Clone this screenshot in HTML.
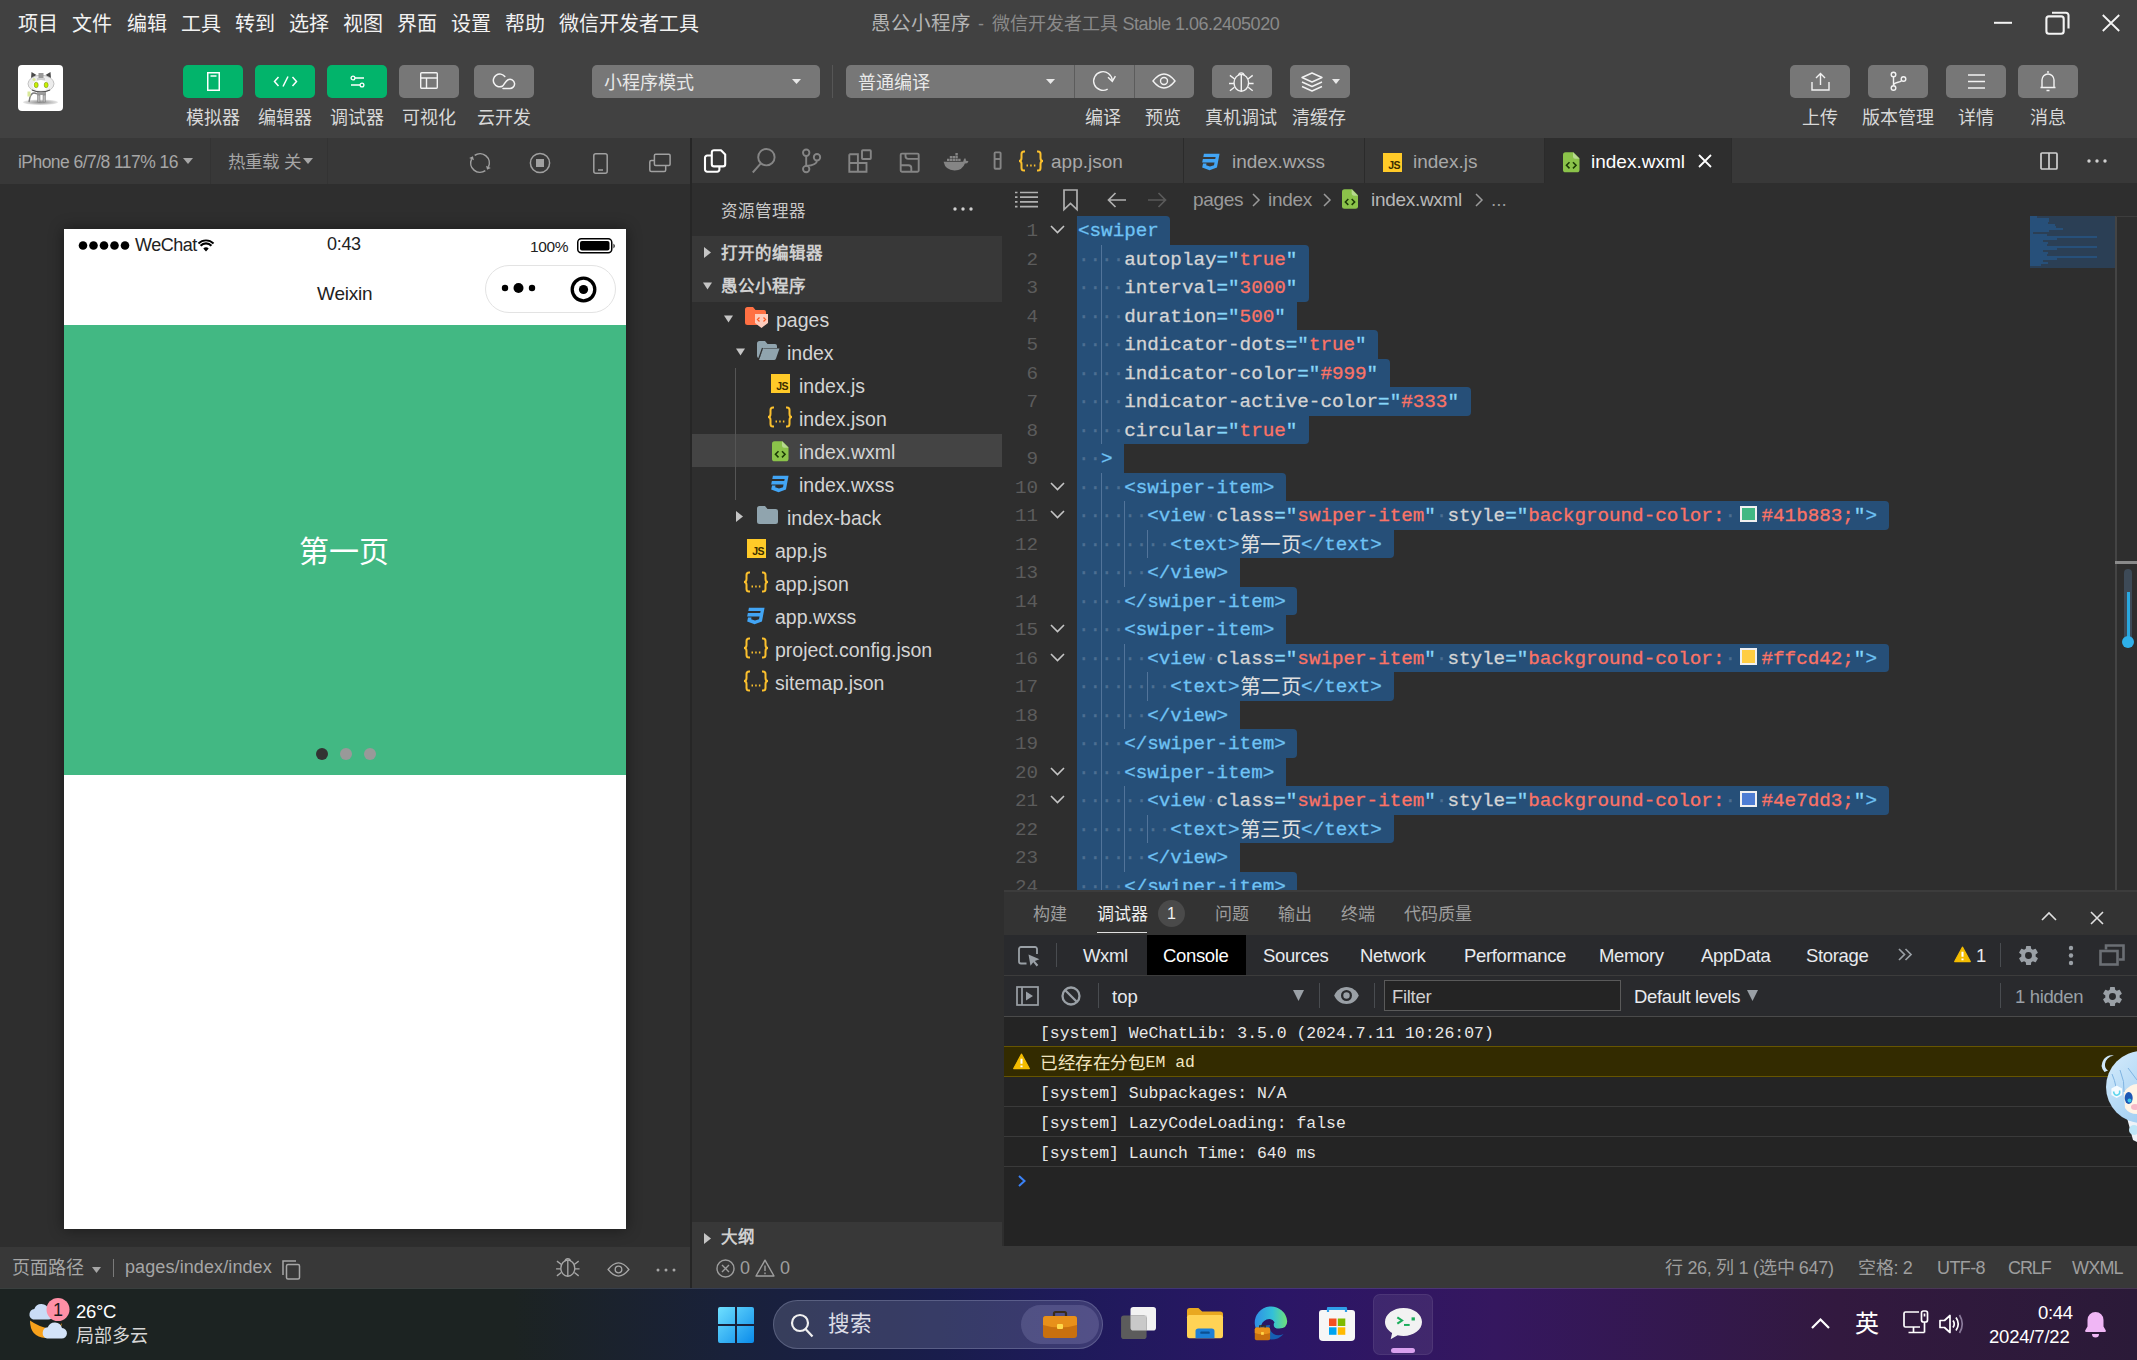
<!DOCTYPE html>
<html lang="zh-CN">
<head>
<meta charset="utf-8">
<title>微信开发者工具</title>
<style>
*{box-sizing:border-box;margin:0;padding:0}
html,body{width:2137px;height:1360px;overflow:hidden;background:#2e2e2e}
body{font-family:"Liberation Sans",sans-serif;color:#d4d4d4;position:relative;font-size:18px;line-height:1}
.abs{position:absolute}
.t{position:absolute;white-space:nowrap;line-height:1}
svg{position:absolute;overflow:visible}
/* ---------- top bars ---------- */
#menubar{position:absolute;left:0;top:0;width:2137px;height:46px;background:#414141}
#menubar .m{position:absolute;top:14px;font-size:20px;color:#f2f2f2;white-space:nowrap}
#toolbar{position:absolute;left:0;top:46px;width:2137px;height:92px;background:#414141}
.btn{position:absolute;top:19px;height:33px;border-radius:5px;background:#777}
.btn.g{background:#02b46b}
.lbl{position:absolute;top:63px;font-size:18px;color:#d8d8d8;white-space:nowrap;transform:translateX(-50%)}
/* ---------- simulator ---------- */
#simhead{position:absolute;left:0;top:138px;width:690px;height:46px;background:#383838}
#sim{position:absolute;left:0;top:184px;width:690px;height:1062px;background:#2e2e2e}
#simfoot{position:absolute;left:0;top:1247px;width:690px;height:41px;background:#383838}
#vsep{position:absolute;left:690px;top:138px;width:1.500px;height:1150px;background:#262626}
/* ---------- explorer ---------- */
#acts{position:absolute;left:692px;top:138px;width:312px;height:45px;background:#383838}
#expl{position:absolute;left:692px;top:183px;width:312px;height:1063px;border-top:1px solid #2e2e2e;background:#2e2e2e}
.sec{position:absolute;left:0;width:310px;height:33px;background:#383838}
.sec span{position:absolute;left:29px;top:9px;font-size:16.5px;font-weight:bold;color:#d0d0d0;white-space:nowrap}
.row{position:absolute;left:0;width:310px;height:33px}
.row .n{position:absolute;top:8.500px;font-size:19.500px;color:#d4d4d4;white-space:nowrap}
.jsi{position:absolute;width:18.500px;height:18.500px;background:#ffca28}
.jsi b{position:absolute;right:1.500px;bottom:1.500px;font-size:10.500px;line-height:1;letter-spacing:-0.6px;color:#3b2c00}
/* ---------- editor ---------- */
#tabs{position:absolute;left:1004px;top:138px;width:1133px;height:45px;background:#383838}
.tab{position:absolute;top:0;height:45px;border-right:1px solid #2b2b2b}
.tab .n{position:absolute;top:14px;font-size:19px;color:#a8a8a8;white-space:nowrap}
#crumbs{position:absolute;left:1004px;top:183px;width:1133px;height:33px;border-top:1px solid #2e2e2e;background:#2e2e2e}
#editor{position:absolute;left:1004px;top:216px;width:1133px;height:674px;background:#2e2e2e;overflow:hidden}
.ln{position:absolute;margin-top:1px;left:0;width:34px;text-align:right;font-family:"Liberation Mono",monospace;font-size:19.24px;color:#5c5c5c;height:28.5px;line-height:28.5px}
.cl{position:absolute;margin-top:1px;left:74px;height:28.5px;line-height:28.5px;font-family:"Liberation Mono",monospace;font-size:19.24px;white-space:pre;color:#d4d4d4;-webkit-text-stroke:.3px}
.sel{position:absolute;left:73px;height:28.5px;background:#264f78}
.ig{position:absolute;width:1px;height:28.500px;background:#52749a}
.cb{display:inline-block;width:16.500px;height:16.500px;border:2px solid #f0f0f0;margin:0 5px 0 4px;vertical-align:-1px}
.cj{display:inline-block;width:61.500px;overflow:hidden;vertical-align:top;height:28.500px;font-family:"Liberation Serif",serif;font-size:20.500px;color:#e0e0e0;letter-spacing:0.5px;-webkit-text-stroke:0}
.tg{color:#6fc3f5}.pq{color:#86d6f8}.st{color:#fb7366}.ws{color:#4d6f92}
/* ---------- panel ---------- */
#panel{position:absolute;left:1004px;top:890px;width:1133px;height:356px;background:#242424}
#status{position:absolute;left:692px;top:1246px;width:1445px;height:42px;background:#383838}
.pt{position:absolute;top:14px;font-size:17px;color:#9d9d9d;white-space:nowrap}
.cr{position:absolute;left:0;width:1133px;height:30px;border-bottom:1px solid #3a3a3a;background:#242424}
.cr span{position:absolute;left:36px;top:7.500px;font-family:"Liberation Mono",monospace;font-size:16.450px;color:#e8e8e8;white-space:pre;line-height:18px}
.cr.w{background:#332b00;border-top:1px solid #665500;border-bottom:1px solid #665500;margin-top:-1px;height:31px}
.cr.w span{top:7px;color:#f2e6c0}
.cr span .cj2{position:static;display:inline-block;width:105.600px;overflow:hidden;vertical-align:top;height:18px;line-height:18px;font-family:"Liberation Serif",serif;font-size:17.600px;color:#f2e6c0;letter-spacing:-0.4px}
.k1,.k2{font-style:normal;display:inline-block;overflow:hidden;vertical-align:top;height:18px;letter-spacing:0}.k1{width:17.700px}.k2{width:35.400px}
/* ---------- taskbar ---------- */
#taskbar{position:absolute;left:0;top:1288px;width:2137px;height:72px;background:linear-gradient(90deg,#1c2322 0%,#1c2322 24%,#19213a 34%,#191d4c 44%,#1e1a5a 50%,#2b1666 60%,#35175f 70%,#32193f 86%,#2b1a38 100%)}
</style>
</head>
<body>
<div id="menubar">
<span class="m" style="left:18px">项目</span><span class="m" style="left:72px">文件</span><span class="m" style="left:127px">编辑</span><span class="m" style="left:181px">工具</span><span class="m" style="left:235px">转到</span><span class="m" style="left:289px">选择</span><span class="m" style="left:343px">视图</span><span class="m" style="left:397px">界面</span><span class="m" style="left:451px">设置</span><span class="m" style="left:505px">帮助</span><span class="m" style="left:559px">微信开发者工具</span>
<span class="t" style="left:871px;top:14px;font-size:19.500px;color:#b4b4b4">愚公小程序</span><span class="t" style="left:978px;top:15px;font-size:18px;color:#8a8a8a">-</span><span class="t" style="left:992px;top:15px;font-size:18px;color:#8a8a8a">微信开发者工具</span><span id="stb" class="t" style="left:1122.500px;top:15px;font-size:18px;color:#8a8a8a;letter-spacing:-0.5px">Stable 1.06.2405020</span>
<svg style="left:1990px;top:10px" width="140" height="28" viewBox="0 0 140 28" fill="none" stroke="#f4f4f4" stroke-width="2.100">
<path d="M4 12.800h18" stroke-width="2"/>
<rect x="56.400" y="6.400" width="17.300" height="17.300" rx="2.500"/><path d="M62 2.700h14a2.500 2.500 0 0 1 2.500 2.500V18.500"/>
<path d="M112.800 5l16.400 16M129.200 5l-16.400 16" stroke-width="1.800"/>
</svg>
</div>
<div id="toolbar">
<div class="abs" style="left:18px;top:19px;width:45px;height:45.500px;border-radius:4px;background:#fff;overflow:hidden">
<svg style="left:0;top:0" width="45" height="45" viewBox="0 0 45 45">
<defs><radialGradient id="sh"><stop offset="0" stop-color="#8a8a8a"/><stop offset="1" stop-color="#e8e8e8"/></radialGradient></defs>
<ellipse cx="22.500" cy="37.300" rx="17.500" ry="2.800" fill="url(#sh)"/>
<path d="M13 13.500l.5-6.500 5 3zM33 13.500l-.5-6.500-5 3z" fill="#4a4a4a"/>
<ellipse cx="23" cy="18.800" rx="13" ry="8.600" fill="#ececec" stroke="#b5b5b5" stroke-width=".8"/>
<path d="M20.500 8h5v6.500h-5z" fill="#9a9a9a"/><path d="M19 13h8v3h-8z" fill="#cfcfcf"/>
<ellipse cx="23" cy="20.200" rx="8.500" ry="5.200" fill="#fff"/>
<ellipse cx="18.200" cy="20" rx="2" ry="2.800" fill="#c6f000" stroke="#6b7a1a" stroke-width=".5"/><ellipse cx="28.200" cy="20" rx="2" ry="2.800" fill="#c6f000" stroke="#6b7a1a" stroke-width=".5"/>
<path d="M14 25q9 4 18 0" stroke="#555" stroke-width="1.300" fill="none"/>
<path d="M19 27h9v3h-9z" fill="#9c9c9c"/><path d="M19.500 30h2.500v7h-2.500zM25 30h2.500v7H25z" fill="#b9b9b9" stroke="#777" stroke-width=".5"/>
<path d="M19 29q-5-3-7 3l-1 5" stroke="#7a7a7a" stroke-width="1.400" fill="none"/>
<path d="M9.500 26.500h3v5h-3z" fill="#d9e89a"/><circle cx="16" cy="14.500" r="1.500" fill="#d9e89a"/>
</svg></div>

<div class="btn g" style="left:183px;width:60px"><svg style="left:24px;top:7px" width="13" height="19" viewBox="0 0 13 19" fill="none" stroke="#fff" stroke-width="1.5"><rect x=".75" y=".75" width="11.500" height="17.500"/><path d="M3.500 4h6"/></svg></div>
<div class="btn g" style="left:255px;width:60px"><svg style="left:18px;top:10px" width="25" height="13" viewBox="0 0 25 13" fill="none" stroke="#fff" stroke-width="1.5"><path d="M5.500 2L1.500 6.500l4 4.500M19.500 2l4 4.500-4 4.500M15 1.500l-5 10"/></svg></div>
<div class="btn g" style="left:327px;width:60px"><svg style="left:23px;top:10px" width="15" height="13" viewBox="0 0 15 13" fill="none" stroke="#fff" stroke-width="1.300"><circle cx="3" cy="3" r="1.900"/><path d="M5 3h9M1 10h9"/><circle cx="12" cy="10" r="1.900"/></svg></div>
<div class="btn" style="left:399px;width:60px"><svg style="left:21px;top:7px" width="18" height="17" viewBox="0 0 18 17" fill="none" stroke="#f2f2f2" stroke-width="1.400"><rect x=".7" y=".7" width="16.600" height="15.600" rx="1"/><path d="M.7 6h16.600M6.500 6v10"/></svg></div>
<div class="btn" style="left:474px;width:60px"><svg style="left:0;top:0" width="60" height="33" viewBox="0 0 60 33" fill="none" stroke="#f4f4f4" stroke-width="1.500" stroke-linecap="round"><path d="M30.800 11.500A6.400 6.400 0 1 0 28.300 21.300C30.300 20 31.300 16 34 14.700A4.600 4.600 0 1 1 35.200 23.400H29"/></svg></div>
<span class="lbl" style="left:213px">模拟器</span><span class="lbl" style="left:285px">编辑器</span><span class="lbl" style="left:357px">调试器</span><span class="lbl" style="left:429px">可视化</span><span class="lbl" style="left:504px">云开发</span>

<div class="btn" style="left:592px;width:228px"><span class="t" style="left:12px;top:9px;font-size:18px;color:#e8e8e8">小程序模式</span><svg style="left:200px;top:14px" width="9" height="5" viewBox="0 0 9 5"><path d="M0 0h9L4.500 5z" fill="#e8e8e8"/></svg></div>
<div class="abs" style="left:832px;top:19px;width:1px;height:33px;background:#565656"></div>
<div class="btn" style="left:846px;width:348px"><span class="t" style="left:12px;top:9px;font-size:18px;color:#e8e8e8">普通编译</span><svg style="left:200px;top:14px" width="9" height="5" viewBox="0 0 9 5"><path d="M0 0h9L4.500 5z" fill="#e8e8e8"/></svg>
<div class="abs" style="left:228px;top:0;width:1px;height:33px;background:#5c5c5c"></div><div class="abs" style="left:288px;top:0;width:1px;height:33px;background:#5c5c5c"></div>
<svg style="left:246px;top:6px" width="24" height="20" viewBox="0 0 24 20" fill="none" stroke="#f2f2f2" stroke-width="1.400"><path d="M15.650 18.050A9.300 9.300 0 1 1 20.260 9.190"/><path d="M16 6.300L20.300 10.300 23.400 5.200"/></svg>
<svg style="left:306px;top:7px" width="24" height="18" viewBox="0 0 24 18" fill="none" stroke="#f2f2f2" stroke-width="1.400"><path d="M1 9q11-14 22 0q-11 14-22 0z"/><circle cx="12" cy="9" r="3.500"/></svg>
</div>
<div class="btn" style="left:1212px;width:60px"><svg style="left:17px;top:5px" width="25" height="22" viewBox="0 0 25 22" fill="none" stroke="#f2f2f2" stroke-width="1.400"><path d="M9.300 5.700A3.100 3.800 0 0 1 15.300 5.700"/><ellipse cx="12.300" cy="12.800" rx="7.300" ry="8.400"/><path d="M12.300 4.400V21.200M4.900 13.500H0M19.700 13.500h4.900M5.600 9L.9 5.400M19 9l4.700-3.600M5.400 17.200L.9 20.800M19.200 17.200l4.500 3.600"/></svg></div>
<div class="btn" style="left:1290px;width:60px"><svg style="left:11px;top:7px" width="22" height="20" viewBox="0 0 22 20" fill="none" stroke="#f2f2f2" stroke-width="1.400" stroke-linejoin="round"><path d="M11 1l10 4.500-10 4.500L1 5.500z"/><path d="M1 10l10 4.500L21 10M1 14.500L11 19l10-4.500"/></svg><svg style="left:42px;top:14px" width="8" height="5" viewBox="0 0 8 5"><path d="M0 0h8L4 5z" fill="#e8e8e8"/></svg></div>
<span class="lbl" style="left:1103px">编译</span><span class="lbl" style="left:1163px">预览</span><span class="lbl" style="left:1241px">真机调试</span><span class="lbl" style="left:1319px">清缓存</span>

<div class="btn" style="left:1790px;width:60px"><svg style="left:21px;top:7px" width="19" height="19" viewBox="0 0 19 19" fill="none" stroke="#f2f2f2" stroke-width="1.400"><path d="M1 10v8h17v-8M9.500 13V1.500M5 6l4.500-4.500L14 6"/></svg></div>
<div class="btn" style="left:1868px;width:60px"><svg style="left:22px;top:6px" width="17" height="21" viewBox="0 0 17 21" fill="none" stroke="#f2f2f2" stroke-width="1.400"><circle cx="3.500" cy="3.500" r="2.300"/><circle cx="3.500" cy="17" r="2.300"/><circle cx="13.500" cy="8" r="2.300"/><path d="M3.500 6v8.500M3.500 14.500c0-4 7.500-2.500 8-5"/></svg></div>
<div class="btn" style="left:1946px;width:60px"><svg style="left:22px;top:9px" width="17" height="15" viewBox="0 0 17 15" fill="none" stroke="#f2f2f2" stroke-width="1.400"><path d="M0 1h17M0 7.500h17M0 14h17"/></svg></div>
<div class="btn" style="left:2018px;width:60px"><svg style="left:21px;top:5px" width="18" height="22" viewBox="0 0 18 22" fill="none" stroke="#f2f2f2" stroke-width="1.400"><path d="M9 1v2M1.500 17.500h15M3 17.500V10a6 6 0 0 1 12 0v7.500M7.500 20.500h3"/></svg></div>
<span class="lbl" style="left:1820px">上传</span><span class="lbl" style="left:1898px">版本管理</span><span class="lbl" style="left:1976px">详情</span><span class="lbl" style="left:2048px">消息</span>
</div>
<div id="simhead">
<span class="t" style="left:18px;top:15.500px;font-size:17.500px;color:#a6a6a6;letter-spacing:-0.55px">iPhone 6/7/8 117% 16</span>
<svg style="left:183px;top:20px" width="10" height="6" viewBox="0 0 10 6"><path d="M0 0h10L5 6z" fill="#a6a6a6"/></svg>
<div class="abs" style="left:210px;top:0;width:1px;height:46px;background:#333"></div>
<span class="t" style="left:228px;top:15.500px;font-size:17.500px;color:#a6a6a6">热重载 关</span>
<svg style="left:303px;top:20px" width="10" height="6" viewBox="0 0 10 6"><path d="M0 0h10L5 6z" fill="#a6a6a6"/></svg>
<div class="abs" style="left:327px;top:0;width:1px;height:46px;background:#333"></div>
<svg style="left:469px;top:14px" width="22" height="22" viewBox="0 0 22 22" fill="none" stroke="#a0a0a0" stroke-width="1.500"><path d="M16.330 18.620A9.300 9.300 0 0 1 2.570 7.070M5.670 3.380A9.300 9.300 0 0 1 19.430 14.930"/><path d="M3.920 4.170L.21 5.970l4.720 2.200zM18.080 17.830l3.710-1.800-4.720-2.200z" fill="#a0a0a0" stroke="none"/></svg>
<svg style="left:529px;top:14px" width="22" height="22" viewBox="0 0 22 22" fill="none" stroke="#a0a0a0" stroke-width="1.500"><circle cx="11" cy="11" r="9.600"/><rect x="7" y="7" width="8" height="8" fill="#a0a0a0" stroke="none"/></svg>
<svg style="left:592.500px;top:14.500px" width="15" height="21" viewBox="0 0 15 21" fill="none" stroke="#a0a0a0" stroke-width="1.500"><rect x=".8" y=".8" width="13.400" height="19.400" rx="2"/><path d="M5 17h5"/></svg>
<svg style="left:649px;top:14.500px" width="22" height="20" viewBox="0 0 22 20" fill="none" stroke="#a0a0a0" stroke-width="1.500"><rect x="5.400" y="1.300" width="15.700" height="11.200" rx="1.200"/><path d="M5.400 7.500H2.300Q.8 7.500 .8 9V17Q.8 18.500 2.300 18.500H15.200Q16.700 18.500 16.700 17V12.500"/></svg>
</div>
<div id="sim">
<div class="abs" style="left:64px;top:45px;width:562px;height:1000px;background:#fff;box-shadow:0 0 14px rgba(0,0,0,.45)">
<svg style="left:14px;top:11px" width="52" height="11" viewBox="0 0 52 11" fill="#000"><circle cx="5" cy="5.500" r="4.300"/><circle cx="15.500" cy="5.500" r="4.300"/><circle cx="26" cy="5.500" r="4.300"/><circle cx="36.500" cy="5.500" r="4.300"/><circle cx="47" cy="5.500" r="4.300"/></svg>
<span class="t" style="left:71px;top:7px;font-size:18px;color:#222;letter-spacing:-0.5px">WeChat</span>
<svg style="left:133px;top:9px" width="18" height="14" viewBox="0 0 18 14" fill="#000"><path d="M9 13.500L6.300 10.600a3.800 3.800 0 0 1 5.400 0zM4.300 8.500a6.600 6.600 0 0 1 9.400 0l1.500-1.600a8.800 8.800 0 0 0-12.400 0zM.8 4.800a11.600 11.600 0 0 1 16.400 0l-1.300 1.400a9.700 9.700 0 0 0-13.800 0z"/></svg>
<span class="t" style="left:263px;top:6px;font-size:18px;color:#222;letter-spacing:-0.3px">0:43</span>
<span class="t" style="left:466px;top:10px;font-size:15.500px;color:#222;letter-spacing:-0.4px">100%</span>
<svg style="left:513px;top:9px" width="40" height="16" viewBox="0 0 40 16"><rect x=".75" y=".75" width="34" height="14" rx="3.500" fill="none" stroke="#000" stroke-width="1.500"/><rect x="3" y="3" width="29.500" height="9.500" rx="2" fill="#000"/><path d="M36.500 5.500q2.500 2.500 0 5z" fill="#000"/></svg>
<span class="t" style="left:253px;top:55px;font-size:19px;color:#222;letter-spacing:-0.2px">Weixin</span>
<div class="abs" style="left:421px;top:36px;width:131px;height:48px;border:1px solid #e3e3e3;border-radius:24px;background:#fff">
<svg style="left:15px;top:16px" width="36" height="12" viewBox="0 0 36 12" fill="#000"><circle cx="4" cy="6" r="3.200"/><circle cx="17.500" cy="6" r="5"/><circle cx="31" cy="6" r="3.200"/></svg>
<svg style="left:84px;top:10px" width="27" height="27" viewBox="0 0 27 27"><circle cx="13.500" cy="13.500" r="11.300" fill="none" stroke="#000" stroke-width="3.300"/><circle cx="13.500" cy="13.500" r="4.600" fill="#000"/></svg>
</div>
<div class="abs" style="left:0;top:96px;width:562px;height:450px;background:#42b883">
<span class="t" style="left:235px;top:212px;font-size:30px;color:#fff">第一页</span>
<div class="abs" style="left:252px;top:423px;width:12px;height:12px;border-radius:50%;background:#333"></div>
<div class="abs" style="left:276px;top:423px;width:12px;height:12px;border-radius:50%;background:#999"></div>
<div class="abs" style="left:300px;top:423px;width:12px;height:12px;border-radius:50%;background:#999"></div>
</div>
</div>
</div>
<div id="simfoot">
<span class="t" style="left:12px;top:12px;font-size:18px;color:#a6a6a6">页面路径</span>
<svg style="left:92px;top:20px" width="9" height="6" viewBox="0 0 9 6"><path d="M0 0h9L4.500 6z" fill="#a6a6a6"/></svg>
<div class="abs" style="left:113px;top:12px;width:1px;height:18px;background:#7a7a7a"></div>
<span class="t" style="left:125px;top:11px;font-size:18px;color:#a6a6a6;letter-spacing:0.1px">pages/index/index</span>
<svg style="left:282px;top:13px" width="19" height="20" viewBox="0 0 19 20" fill="none" stroke="#a6a6a6" stroke-width="1.500"><path d="M1 15V1h13"/><rect x="4.500" y="4.500" width="13" height="14.500" rx="1.500"/></svg>
<svg style="left:556px;top:9px" width="24" height="21" viewBox="0 0 25 22" fill="none" stroke="#a6a6a6" stroke-width="1.400"><path d="M9.300 5.700A3.100 3.800 0 0 1 15.300 5.700"/><ellipse cx="12.300" cy="12.800" rx="7.300" ry="8.400"/><path d="M12.300 4.400V21.200M4.900 13.500H0M19.700 13.500h4.900M5.600 9L.9 5.400M19 9l4.700-3.600M5.400 17.200L.9 20.800M19.200 17.200l4.500 3.600"/></svg>
<svg style="left:606px;top:14px" width="25" height="17" viewBox="0 0 24 18" fill="none" stroke="#a6a6a6" stroke-width="1.400"><path d="M1 9q11-14 22 0q-11 14-22 0z"/><circle cx="12" cy="9" r="3.500"/></svg>
<svg style="left:656px;top:21px" width="20" height="4" viewBox="0 0 20 4" fill="#a6a6a6"><circle cx="2" cy="2" r="1.500"/><circle cx="10" cy="2" r="1.500"/><circle cx="18" cy="2" r="1.500"/></svg>
</div>
<div id="acts">
<svg style="left:0;top:0" width="312" height="46" viewBox="0 0 312 46" fill="none" stroke="#858585" stroke-width="1.900">
<g stroke="#fff" stroke-width="2.100" stroke-linejoin="round"><path d="M19.700 17.500h-4.500a2.200 2.200 0 0 0-2.200 2.200v11.800a2.200 2.200 0 0 0 2.200 2.200h10a2.200 2.200 0 0 0 2.200-2.200v-3.200"/><path d="M22 12.200h7l4.200 4.200v9.800a2.200 2.200 0 0 1-2.200 2.200h-9a2.200 2.200 0 0 1-2.200-2.200V14.400a2.200 2.200 0 0 1 2.200-2.200z"/></g>
<circle cx="74.400" cy="19.200" r="8.200"/><path d="M68.600 25.600L60.800 34.500"/>
<circle cx="114.200" cy="14.700" r="3.200"/><circle cx="114.200" cy="31.100" r="3.200"/><circle cx="125" cy="19.200" r="3.200"/><path d="M114.200 17.900v10M125 22.400q0 4.500-10.800 5.500"/>
<path d="M157.300 16.200h8.600v17.600M157.300 16.200v17.600h17.200v-8.800h-17.200"/><rect x="170" y="12.200" width="8.800" height="8.800" rx=".8"/>
<rect x="208.700" y="15.600" width="18" height="18.200" rx="1.200"/><path d="M213.500 15.600v2.500q0 2.800 2.800 2.800h10.400M208.700 27.200h7.800q2.800 0 2.800 2.800v3.800"/>
<g fill="#858585" stroke="none"><path d="M251.600 23.800h19.600q.4-2.600 1.800-3.700 1 1.200 1 2.800 1.500-.3 2.500.5-.9 2.200-3.600 2.200-2.300 6.800-10.300 6.800-9.300 0-11-8.600z"/><path d="M255 20.700h2.400v2.400H255zM257.800 20.700h2.400v2.400h-2.400zM260.600 20.700h2.400v2.400h-2.400zM263.400 20.700h2.400v2.400h-2.400zM257.800 17.900h2.400v2.400h-2.400zM260.600 17.900h2.400v2.400h-2.400zM263.400 17.900h2.400v2.400h-2.400zM263.400 15.100h2.400v2.400h-2.400zM266.200 20.700h2.400v2.400h-2.400z"/></g>
<rect x="302.600" y="14.400" width="6" height="16.400" rx=".8"/><path d="M302.600 21h6"/>
</svg>
</div>
<div id="expl">
<span class="t" style="left:29px;top:19px;font-size:16.500px;color:#c8c8c8">资源管理器</span>
<svg style="left:261px;top:23px" width="20" height="4" viewBox="0 0 20 4" fill="#d0d0d0"><circle cx="2" cy="2" r="1.700"/><circle cx="10" cy="2" r="1.700"/><circle cx="18" cy="2" r="1.700"/></svg>
<div class="sec" style="top:52px"><svg style="left:12px;top:11px" width="7" height="11" viewBox="0 0 7 11"><path d="M0 0l7 5.500L0 11z" fill="#c5c5c5"/></svg><span>打开的编辑器</span></div>
<div class="sec" style="top:85px"><svg style="left:10px;top:13px" width="9" height="7" viewBox="0 0 9 7" transform="translate(1 .5)"><path d="M0 0h9L4.500 7z" fill="#c5c5c5"/></svg><span>愚公小程序</span></div>
<div class="row" style="top:118px"><svg style="left:31px;top:13px" width="9" height="7" viewBox="0 0 9 7" transform="translate(1 .5)"><path d="M0 0h9L4.500 7z" fill="#c5c5c5"/></svg><svg style="left:53px;top:5px" width="24" height="22" viewBox="0 0 24 22"><path d="M0 2.500A2.500 2.500 0 0 1 2.500 0H8l2.500 3H19a2 2 0 0 1 2 2v11a2 2 0 0 1-2 2H2.500A2.500 2.500 0 0 1 0 15.500z" fill="#ff7043"/><path d="M10 7h13v9l-6.500 5L10 16z" fill="#ffccbc"/><path d="M14.500 10.500l-2 2 2 2M18.500 10.500l2 2-2 2" stroke="#ff5722" stroke-width="1.300" fill="none"/></svg><span class="n" style="left:84px">pages</span></div>
<div class="row" style="top:151px"><svg style="left:43px;top:13px" width="9" height="7" viewBox="0 0 9 7" transform="translate(1 .5)"><path d="M0 0h9L4.500 7z" fill="#c5c5c5"/></svg><svg style="left:65px;top:6px" width="23" height="19" viewBox="0 0 23 19"><path d="M0 2.500A2.500 2.500 0 0 1 2.500 0H8l2.500 3H18a2 2 0 0 1 2 2v2H6.500L2.500 17H2a2 2 0 0 1-2-2z" fill="#90a4ae"/><path d="M6 7.500h16.500L19 17.500Q18.500 19 17 19H2z" fill="#90a4ae"/><path d="M5.500 7L2 17" stroke="#2e2e2e" stroke-width="1.200"/></svg><span class="n" style="left:95px">index</span></div>
<div class="row" style="top:184px"><div class="jsi" style="left:79px;top:6px"><b>JS</b></div><span class="n" style="left:107px">index.js</span></div>
<div class="row" style="top:217px"><svg style="left:75px;top:5px" width="26" height="22" viewBox="0 0 26 22" fill="none" stroke="#fbc02d" stroke-width="2"><path d="M7 1.500H6q-2.500 0-2.500 2.500v4q0 3-2.500 3 2.500 0 2.500 3v4q0 2.500 2.500 2.500h1M19 1.500h1q2.500 0 2.500 2.500v4q0 3 2.500 3-2.500 0-2.500 3v4q0 2.500-2.500 2.500h-1"/><path d="M8.500 15.500h1.500M12.200 15.500h1.500M15.900 15.500h1.500" stroke-width="2.200"/></svg><span class="n" style="left:107px">index.json</span></div>
<div class="row" style="top:250px;background:#444"><svg style="left:79.5px;top:6.5px" width="16.500" height="20.500" viewBox="0 0 19 23"><path d="M3 0h9l7 7v13a3 3 0 0 1-3 3H3a3 3 0 0 1-3-3V3a3 3 0 0 1 3-3z" fill="#8bc34a"/><path d="M11.500 0v5a2.500 2.500 0 0 0 2.500 2.500h5z" fill="#dcedc8" opacity=".55"/><path d="M7.500 11.500L4 15l3.500 3.500M11.500 11.500L15 15l-3.500 3.500" fill="none" stroke="#1b3a06" stroke-width="1.800"/></svg><span class="n" style="left:107px">index.wxml</span></div>
<div class="row" style="top:283px"><svg style="left:77px;top:7.5px" width="20" height="18" viewBox="0 0 23 23" preserveAspectRatio="none"><path d="M4.500 1h18l-3 17.500L11 22l-8.500-3.500 1-5h4l-.4 2.200 4.400 1.600 4.600-1.700.6-3.600H2.500l.8-4.300h14.200l.5-2.700H3.800z" fill="#42a5f5"/></svg><span class="n" style="left:107px">index.wxss</span></div>
<div class="row" style="top:316px"><svg style="left:44px;top:11px" width="7" height="11" viewBox="0 0 7 11"><path d="M0 0l7 5.500L0 11z" fill="#c5c5c5"/></svg><svg style="left:65px;top:6px" width="21" height="18" viewBox="0 0 21 18"><path d="M0 2.500A2.500 2.500 0 0 1 2.500 0H8l2.500 3h8A2.500 2.500 0 0 1 21 5.500v10a2.500 2.500 0 0 1-2.500 2.500h-16A2.500 2.500 0 0 1 0 15.500z" fill="#90a4ae"/></svg><span class="n" style="left:95px">index-back</span></div>
<div class="row" style="top:349px"><div class="jsi" style="left:55px;top:6px"><b>JS</b></div><span class="n" style="left:83px">app.js</span></div>
<div class="row" style="top:382px"><svg style="left:51px;top:5px" width="26" height="22" viewBox="0 0 26 22" fill="none" stroke="#fbc02d" stroke-width="2"><path d="M7 1.500H6q-2.500 0-2.500 2.500v4q0 3-2.500 3 2.500 0 2.500 3v4q0 2.500 2.500 2.500h1M19 1.500h1q2.500 0 2.500 2.500v4q0 3 2.500 3-2.500 0-2.500 3v4q0 2.500-2.500 2.500h-1"/><path d="M8.500 15.500h1.500M12.200 15.500h1.500M15.900 15.500h1.500" stroke-width="2.200"/></svg><span class="n" style="left:83px">app.json</span></div>
<div class="row" style="top:415px"><svg style="left:53px;top:7.5px" width="20" height="18" viewBox="0 0 23 23" preserveAspectRatio="none"><path d="M4.500 1h18l-3 17.500L11 22l-8.500-3.500 1-5h4l-.4 2.200 4.400 1.600 4.600-1.700.6-3.600H2.500l.8-4.300h14.200l.5-2.700H3.800z" fill="#42a5f5"/></svg><span class="n" style="left:83px">app.wxss</span></div>
<div class="row" style="top:448px"><svg style="left:51px;top:5px" width="26" height="22" viewBox="0 0 26 22" fill="none" stroke="#fbc02d" stroke-width="2"><path d="M7 1.500H6q-2.500 0-2.500 2.500v4q0 3-2.500 3 2.500 0 2.500 3v4q0 2.500 2.500 2.500h1M19 1.500h1q2.500 0 2.500 2.500v4q0 3 2.500 3-2.500 0-2.500 3v4q0 2.500-2.500 2.500h-1"/><path d="M8.500 15.500h1.500M12.200 15.500h1.500M15.900 15.500h1.500" stroke-width="2.200"/></svg><span class="n" style="left:83px">project.config.json</span></div>
<div class="row" style="top:481px"><svg style="left:51px;top:5px" width="26" height="22" viewBox="0 0 26 22" fill="none" stroke="#fbc02d" stroke-width="2"><path d="M7 1.500H6q-2.500 0-2.500 2.500v4q0 3-2.500 3 2.500 0 2.500 3v4q0 2.500 2.500 2.500h1M19 1.500h1q2.500 0 2.500 2.500v4q0 3 2.500 3-2.500 0-2.500 3v4q0 2.500-2.500 2.500h-1"/><path d="M8.500 15.500h1.500M12.200 15.500h1.500M15.900 15.500h1.500" stroke-width="2.200"/></svg><span class="n" style="left:83px">sitemap.json</span></div>
<div class="abs" style="left:43px;top:184px;width:1px;height:132px;background:#555"></div>
<div class="sec" style="top:1038px;height:24px;background:#383838"><svg style="left:12px;top:10.500px" width="7" height="11" viewBox="0 0 7 11"><path d="M0 0l7 5.500L0 11z" fill="#c5c5c5"/></svg><span style="top:7px">大纲</span></div>
</div>
<div id="tabs">
<div class="tab" style="left:0;width:180px"><svg style="left:14px;top:12px" width="26" height="22" viewBox="0 0 26 22" fill="none" stroke="#fbc02d" stroke-width="2"><path d="M7 1.500H6q-2.500 0-2.500 2.500v4q0 3-2.500 3 2.500 0 2.500 3v4q0 2.500 2.500 2.500h1M19 1.500h1q2.500 0 2.500 2.500v4q0 3 2.500 3-2.500 0-2.500 3v4q0 2.500-2.500 2.500h-1"/><path d="M8.500 15.500h1.500M12.200 15.500h1.500M15.900 15.500h1.500" stroke-width="2.200"/></svg><span class="n" style="left:47px">app.json</span></div>
<div class="tab" style="left:180px;width:181px"><svg style="left:16px;top:14.5px" width="20" height="18" viewBox="0 0 23 23" preserveAspectRatio="none"><path d="M4.500 1h18l-3 17.500L11 22l-8.500-3.500 1-5h4l-.4 2.200 4.400 1.600 4.600-1.700.6-3.600H2.500l.8-4.300h14.200l.5-2.700H3.800z" fill="#42a5f5"/></svg><span class="n" style="left:48px">index.wxss</span></div>
<div class="tab" style="left:361px;width:180px"><div class="jsi" style="left:18px;top:15px"><b>JS</b></div><span class="n" style="left:48px">index.js</span></div>
<div class="tab" style="left:541px;width:187px;background:#2e2e2e"><svg style="left:17.5px;top:13.5px" width="16.500" height="20.500" viewBox="0 0 19 23"><path d="M3 0h9l7 7v13a3 3 0 0 1-3 3H3a3 3 0 0 1-3-3V3a3 3 0 0 1 3-3z" fill="#8bc34a"/><path d="M11.500 0v5a2.500 2.500 0 0 0 2.500 2.500h5z" fill="#dcedc8" opacity=".55"/><path d="M7.500 11.500L4 15l3.500 3.500M11.500 11.500L15 15l-3.500 3.500" fill="none" stroke="#1b3a06" stroke-width="1.800"/></svg><span class="n" style="left:46px;color:#fff">index.wxml</span><svg style="left:153px;top:16px" width="14" height="14" viewBox="0 0 14 14" stroke="#fff" stroke-width="1.800"><path d="M1 1l12 12M13 1L1 13"/></svg></div>
<svg style="left:1036px;top:14px" width="18" height="18" viewBox="0 0 18 18" fill="none" stroke="#d0d0d0" stroke-width="1.700"><rect x="1" y="1" width="16" height="16" rx="1"/><path d="M9 1v16"/></svg>
<svg style="left:1083px;top:21px" width="20" height="4" viewBox="0 0 20 4" fill="#d0d0d0"><circle cx="2" cy="2" r="1.700"/><circle cx="10" cy="2" r="1.700"/><circle cx="18" cy="2" r="1.700"/></svg>
</div>
<div id="crumbs">
<svg style="left:11px;top:7px" width="23" height="17" viewBox="0 0 23 17" fill="none" stroke="#b0b0b0" stroke-width="1.700"><path d="M5 1.500h18M5 6.200h18M5 10.900h18M5 15.600h18M0 1.500h2.500M0 6.200h2.500M0 10.900h2.500M0 15.600h2.500"/></svg>
<svg style="left:59px;top:5px" width="15" height="22" viewBox="0 0 15 22" fill="none" stroke="#b0b0b0" stroke-width="1.700"><path d="M1 1h13v19.500l-6.500-6L1 20.500z"/></svg>
<svg style="left:103px;top:8px" width="19" height="16" viewBox="0 0 19 16" fill="none" stroke="#b0b0b0" stroke-width="1.700"><path d="M19 8H1.500M8.500 1L1.500 8l7 7"/></svg>
<svg style="left:144px;top:8px" width="19" height="16" viewBox="0 0 19 16" fill="none" stroke="#5a5a5a" stroke-width="1.700"><path d="M0 8h17.500M10.500 1l7 7-7 7"/></svg>
<span class="t" style="left:189px;top:6px;font-size:19px;color:#9a9a9a;letter-spacing:-0.3px">pages</span>
<svg style="left:248px;top:9px" width="8" height="14" viewBox="0 0 8 14" fill="none" stroke="#9a9a9a" stroke-width="1.500"><path d="M1 1l6 6-6 6"/></svg>
<span class="t" style="left:264px;top:6px;font-size:19px;color:#9a9a9a;letter-spacing:-0.3px">index</span>
<svg style="left:319px;top:9px" width="8" height="14" viewBox="0 0 8 14" fill="none" stroke="#9a9a9a" stroke-width="1.500"><path d="M1 1l6 6-6 6"/></svg>
<svg style="left:338px;top:5px" width="16" height="20" viewBox="0 0 19 23"><path d="M3 0h9l7 7v13a3 3 0 0 1-3 3H3a3 3 0 0 1-3-3V3a3 3 0 0 1 3-3z" fill="#8bc34a"/><path d="M11.500 0v5a2.500 2.500 0 0 0 2.500 2.500h5z" fill="#dcedc8" opacity=".55"/><path d="M7.500 11.500L4 15l3.500 3.500M11.500 11.500L15 15l-3.500 3.500" fill="none" stroke="#1b3a06" stroke-width="1.800"/></svg>
<span class="t" style="left:367px;top:6px;font-size:19px;color:#b8b8b8;letter-spacing:-0.3px">index.wxml</span>
<svg style="left:471px;top:9px" width="8" height="14" viewBox="0 0 8 14" fill="none" stroke="#9a9a9a" stroke-width="1.500"><path d="M1 1l6 6-6 6"/></svg>
<span class="t" style="left:487px;top:6px;font-size:19px;color:#9a9a9a">...</span>
</div>
<div id="editor">
<div class="sel" style="top:0.0px;width:93.4px;border-radius:0 4px 0px 0"></div>
<div class="sel" style="top:28.5px;width:231.9px;border-radius:0 4px 0px 0"></div>
<div class="sel" style="top:57.0px;width:231.9px;border-radius:0 0px 4px 0"></div>
<div class="sel" style="top:85.5px;width:220.4px;border-radius:0 0px 0px 0"></div>
<div class="sel" style="top:114.0px;width:301.2px;border-radius:0 4px 0px 0"></div>
<div class="sel" style="top:142.5px;width:312.7px;border-radius:0 4px 0px 0"></div>
<div class="sel" style="top:171.0px;width:393.6px;border-radius:0 4px 4px 0"></div>
<div class="sel" style="top:199.5px;width:231.9px;border-radius:0 0px 4px 0"></div>
<div class="sel" style="top:228.0px;width:47.2px;border-radius:0 0px 0px 0"></div>
<div class="sel" style="top:256.5px;width:208.8px;border-radius:0 4px 0px 0"></div>
<div class="sel" style="top:285.0px;width:811.6px;border-radius:0 4px 4px 0"></div>
<div class="sel" style="top:313.5px;width:316.5px;border-radius:0 0px 4px 0"></div>
<div class="sel" style="top:342.0px;width:162.6px;border-radius:0 0px 0px 0"></div>
<div class="sel" style="top:370.5px;width:220.4px;border-radius:0 4px 4px 0"></div>
<div class="sel" style="top:399.0px;width:208.8px;border-radius:0 0px 0px 0"></div>
<div class="sel" style="top:427.5px;width:811.6px;border-radius:0 4px 4px 0"></div>
<div class="sel" style="top:456.0px;width:316.5px;border-radius:0 0px 4px 0"></div>
<div class="sel" style="top:484.5px;width:162.6px;border-radius:0 0px 0px 0"></div>
<div class="sel" style="top:513.0px;width:220.4px;border-radius:0 4px 4px 0"></div>
<div class="sel" style="top:541.5px;width:208.8px;border-radius:0 0px 0px 0"></div>
<div class="sel" style="top:570.0px;width:811.6px;border-radius:0 4px 4px 0"></div>
<div class="sel" style="top:598.5px;width:316.5px;border-radius:0 0px 4px 0"></div>
<div class="sel" style="top:627.0px;width:162.6px;border-radius:0 0px 0px 0"></div>
<div class="sel" style="top:655.5px;width:220.4px;border-radius:0 4px 4px 0"></div>
<div class="ig" style="left:97.1px;top:28.5px"></div>
<div class="ig" style="left:97.1px;top:57.0px"></div>
<div class="ig" style="left:97.1px;top:85.5px"></div>
<div class="ig" style="left:97.1px;top:114.0px"></div>
<div class="ig" style="left:97.1px;top:142.5px"></div>
<div class="ig" style="left:97.1px;top:171.0px"></div>
<div class="ig" style="left:97.1px;top:199.5px"></div>
<div class="ig" style="left:97.1px;top:256.5px"></div>
<div class="ig" style="left:97.1px;top:285.0px"></div>
<div class="ig" style="left:120.2px;top:285.0px"></div>
<div class="ig" style="left:97.1px;top:313.5px"></div>
<div class="ig" style="left:120.2px;top:313.5px"></div>
<div class="ig" style="left:143.3px;top:313.5px"></div>
<div class="ig" style="left:97.1px;top:342.0px"></div>
<div class="ig" style="left:120.2px;top:342.0px"></div>
<div class="ig" style="left:97.1px;top:370.5px"></div>
<div class="ig" style="left:97.1px;top:399.0px"></div>
<div class="ig" style="left:97.1px;top:427.5px"></div>
<div class="ig" style="left:120.2px;top:427.5px"></div>
<div class="ig" style="left:97.1px;top:456.0px"></div>
<div class="ig" style="left:120.2px;top:456.0px"></div>
<div class="ig" style="left:143.3px;top:456.0px"></div>
<div class="ig" style="left:97.1px;top:484.5px"></div>
<div class="ig" style="left:120.2px;top:484.5px"></div>
<div class="ig" style="left:97.1px;top:513.0px"></div>
<div class="ig" style="left:97.1px;top:541.5px"></div>
<div class="ig" style="left:97.1px;top:570.0px"></div>
<div class="ig" style="left:120.2px;top:570.0px"></div>
<div class="ig" style="left:97.1px;top:598.5px"></div>
<div class="ig" style="left:120.2px;top:598.5px"></div>
<div class="ig" style="left:143.3px;top:598.5px"></div>
<div class="ig" style="left:97.1px;top:627.0px"></div>
<div class="ig" style="left:120.2px;top:627.0px"></div>
<div class="ig" style="left:97.1px;top:655.5px"></div>
<div class="ln" style="top:0.0px">1</div>
<svg style="left:46px;top:9.0px" width="15" height="9" viewBox="0 0 15 9" fill="none" stroke="#c5c5c5" stroke-width="1.600"><path d="M1 1l6.500 6.500L14 1"/></svg>
<div class="cl" style="top:0.0px"><span class="tg">&lt;swiper</span></div>
<div class="ln" style="top:28.5px">2</div>
<div class="cl" style="top:28.5px"><span class="ws">····</span>autoplay<span class="pq">="</span><span class="st">true</span><span class="pq">"</span></div>
<div class="ln" style="top:57.0px">3</div>
<div class="cl" style="top:57.0px"><span class="ws">····</span>interval<span class="pq">="</span><span class="st">3000</span><span class="pq">"</span></div>
<div class="ln" style="top:85.5px">4</div>
<div class="cl" style="top:85.5px"><span class="ws">····</span>duration<span class="pq">="</span><span class="st">500</span><span class="pq">"</span></div>
<div class="ln" style="top:114.0px">5</div>
<div class="cl" style="top:114.0px"><span class="ws">····</span>indicator-dots<span class="pq">="</span><span class="st">true</span><span class="pq">"</span></div>
<div class="ln" style="top:142.5px">6</div>
<div class="cl" style="top:142.5px"><span class="ws">····</span>indicator-color<span class="pq">="</span><span class="st">#999</span><span class="pq">"</span></div>
<div class="ln" style="top:171.0px">7</div>
<div class="cl" style="top:171.0px"><span class="ws">····</span>indicator-active-color<span class="pq">="</span><span class="st">#333</span><span class="pq">"</span></div>
<div class="ln" style="top:199.5px">8</div>
<div class="cl" style="top:199.5px"><span class="ws">····</span>circular<span class="pq">="</span><span class="st">true</span><span class="pq">"</span></div>
<div class="ln" style="top:228.0px">9</div>
<div class="cl" style="top:228.0px"><span class="ws">··</span><span class="tg">&gt;</span></div>
<div class="ln" style="top:256.5px">10</div>
<svg style="left:46px;top:265.5px" width="15" height="9" viewBox="0 0 15 9" fill="none" stroke="#c5c5c5" stroke-width="1.600"><path d="M1 1l6.500 6.500L14 1"/></svg>
<div class="cl" style="top:256.5px"><span class="ws">····</span><span class="tg">&lt;swiper-item&gt;</span></div>
<div class="ln" style="top:285.0px">11</div>
<svg style="left:46px;top:294.0px" width="15" height="9" viewBox="0 0 15 9" fill="none" stroke="#c5c5c5" stroke-width="1.600"><path d="M1 1l6.500 6.500L14 1"/></svg>
<div class="cl" style="top:285.0px"><span class="ws">······</span><span class="tg">&lt;view</span><span class="ws">·</span>class<span class="pq">="</span><span class="st">swiper-item</span><span class="pq">"</span><span class="ws">·</span>style<span class="pq">="</span><span class="st">background-color:</span><span class="ws">·</span><span class="cb" style="background:#41b883"></span><span class="st">#41b883;</span><span class="pq">"</span><span class="tg">&gt;</span></div>
<div class="ln" style="top:313.5px">12</div>
<div class="cl" style="top:313.5px"><span class="ws">········</span><span class="tg">&lt;text&gt;</span><span class="cj">第一页</span><span class="tg">&lt;/text&gt;</span></div>
<div class="ln" style="top:342.0px">13</div>
<div class="cl" style="top:342.0px"><span class="ws">······</span><span class="tg">&lt;/view&gt;</span></div>
<div class="ln" style="top:370.5px">14</div>
<div class="cl" style="top:370.5px"><span class="ws">····</span><span class="tg">&lt;/swiper-item&gt;</span></div>
<div class="ln" style="top:399.0px">15</div>
<svg style="left:46px;top:408.0px" width="15" height="9" viewBox="0 0 15 9" fill="none" stroke="#c5c5c5" stroke-width="1.600"><path d="M1 1l6.500 6.500L14 1"/></svg>
<div class="cl" style="top:399.0px"><span class="ws">····</span><span class="tg">&lt;swiper-item&gt;</span></div>
<div class="ln" style="top:427.5px">16</div>
<svg style="left:46px;top:436.5px" width="15" height="9" viewBox="0 0 15 9" fill="none" stroke="#c5c5c5" stroke-width="1.600"><path d="M1 1l6.500 6.500L14 1"/></svg>
<div class="cl" style="top:427.5px"><span class="ws">······</span><span class="tg">&lt;view</span><span class="ws">·</span>class<span class="pq">="</span><span class="st">swiper-item</span><span class="pq">"</span><span class="ws">·</span>style<span class="pq">="</span><span class="st">background-color:</span><span class="ws">·</span><span class="cb" style="background:#ffcd42"></span><span class="st">#ffcd42;</span><span class="pq">"</span><span class="tg">&gt;</span></div>
<div class="ln" style="top:456.0px">17</div>
<div class="cl" style="top:456.0px"><span class="ws">········</span><span class="tg">&lt;text&gt;</span><span class="cj">第二页</span><span class="tg">&lt;/text&gt;</span></div>
<div class="ln" style="top:484.5px">18</div>
<div class="cl" style="top:484.5px"><span class="ws">······</span><span class="tg">&lt;/view&gt;</span></div>
<div class="ln" style="top:513.0px">19</div>
<div class="cl" style="top:513.0px"><span class="ws">····</span><span class="tg">&lt;/swiper-item&gt;</span></div>
<div class="ln" style="top:541.5px">20</div>
<svg style="left:46px;top:550.5px" width="15" height="9" viewBox="0 0 15 9" fill="none" stroke="#c5c5c5" stroke-width="1.600"><path d="M1 1l6.500 6.500L14 1"/></svg>
<div class="cl" style="top:541.5px"><span class="ws">····</span><span class="tg">&lt;swiper-item&gt;</span></div>
<div class="ln" style="top:570.0px">21</div>
<svg style="left:46px;top:579.0px" width="15" height="9" viewBox="0 0 15 9" fill="none" stroke="#c5c5c5" stroke-width="1.600"><path d="M1 1l6.500 6.500L14 1"/></svg>
<div class="cl" style="top:570.0px"><span class="ws">······</span><span class="tg">&lt;view</span><span class="ws">·</span>class<span class="pq">="</span><span class="st">swiper-item</span><span class="pq">"</span><span class="ws">·</span>style<span class="pq">="</span><span class="st">background-color:</span><span class="ws">·</span><span class="cb" style="background:#4e7dd3"></span><span class="st">#4e7dd3;</span><span class="pq">"</span><span class="tg">&gt;</span></div>
<div class="ln" style="top:598.5px">22</div>
<div class="cl" style="top:598.5px"><span class="ws">········</span><span class="tg">&lt;text&gt;</span><span class="cj">第三页</span><span class="tg">&lt;/text&gt;</span></div>
<div class="ln" style="top:627.0px">23</div>
<div class="cl" style="top:627.0px"><span class="ws">······</span><span class="tg">&lt;/view&gt;</span></div>
<div class="ln" style="top:655.5px">24</div>
<div class="cl" style="top:655.5px"><span class="ws">····</span><span class="tg">&lt;/swiper-item&gt;</span></div>
<div class="abs" style="left:1026px;top:0;width:85.300px;height:52px;background:#2b3f55"></div>
<div class="abs" style="left:1026px;top:0px;width:7.1px;height:2px;background:#27507a"></div>
<div class="abs" style="left:1026px;top:2px;width:19px;height:2px;background:#27507a"></div>
<div class="abs" style="left:1026px;top:4px;width:19px;height:2px;background:#27507a"></div>
<div class="abs" style="left:1026px;top:6px;width:17.9px;height:2px;background:#27507a"></div>
<div class="abs" style="left:1026px;top:8px;width:25px;height:2px;background:#27507a"></div>
<div class="abs" style="left:1026px;top:10px;width:26.1px;height:2px;background:#27507a"></div>
<div class="abs" style="left:1026px;top:12px;width:33px;height:2px;background:#27507a"></div>
<div class="abs" style="left:1026px;top:14px;width:19px;height:2px;background:#27507a"></div>
<div class="abs" style="left:1026px;top:16px;width:3.1px;height:2px;background:#27507a"></div>
<div class="abs" style="left:1026px;top:18px;width:17.1px;height:2px;background:#27507a"></div>
<div class="abs" style="left:1026px;top:20px;width:67.1px;height:2px;background:#27507a"></div>
<div class="abs" style="left:1026px;top:22px;width:27.1px;height:2px;background:#27507a"></div>
<div class="abs" style="left:1026px;top:24px;width:13px;height:2px;background:#27507a"></div>
<div class="abs" style="left:1026px;top:26px;width:18px;height:2px;background:#27507a"></div>
<div class="abs" style="left:1026px;top:28px;width:17.1px;height:2px;background:#27507a"></div>
<div class="abs" style="left:1026px;top:30px;width:67.1px;height:2px;background:#27507a"></div>
<div class="abs" style="left:1026px;top:32px;width:27.1px;height:2px;background:#27507a"></div>
<div class="abs" style="left:1026px;top:34px;width:13px;height:2px;background:#27507a"></div>
<div class="abs" style="left:1026px;top:36px;width:18px;height:2px;background:#27507a"></div>
<div class="abs" style="left:1026px;top:38px;width:17.1px;height:2px;background:#27507a"></div>
<div class="abs" style="left:1026px;top:40px;width:67.1px;height:2px;background:#27507a"></div>
<div class="abs" style="left:1026px;top:42px;width:27.1px;height:2px;background:#27507a"></div>
<div class="abs" style="left:1026px;top:44px;width:13px;height:2px;background:#27507a"></div>
<div class="abs" style="left:1026px;top:46px;width:18px;height:2px;background:#27507a"></div>
<div class="abs" style="left:1026px;top:48px;width:11px;height:2px;background:#27507a"></div>
<div class="abs" style="left:1111px;top:0;width:1.500px;height:674px;background:#444"></div><div class="abs" style="left:1112px;top:0;width:21px;height:1px;background:#3d3d3d"></div>
<div class="abs" style="left:1111px;top:345px;width:22px;height:3px;background:#8a8a8a"></div>
<div class="abs" style="left:1120px;top:353px;width:8px;height:78px;border-radius:4px;background:#3d4a57"></div>
<div class="abs" style="left:1122.500px;top:376px;width:3px;height:50px;background:#29a8e0"></div>
<div class="abs" style="left:1118px;top:420px;width:12px;height:12px;border-radius:50%;background:#2eb0ea"></div>
</div>
<div id="panel">
<div class="abs" style="left:0;top:0;width:1133px;height:2px;background:#3c3c3c"></div>
<div class="abs" style="left:0;top:2px;width:1133px;height:43px;background:#333333">
<span class="pt" style="left:29px">构建</span><span class="pt" style="left:93px;color:#f0f0f0">调试器</span>
<div class="abs" style="left:93px;top:40px;width:50px;height:1px;background:#e0e0e0"></div>
<div class="abs" style="left:154px;top:8px;width:27px;height:27px;border-radius:50%;background:#4a4a4a"></div><span class="t" style="left:163px;top:14px;font-size:16px;color:#f0f0f0">1</span>
<span class="pt" style="left:211px">问题</span><span class="pt" style="left:274px">输出</span><span class="pt" style="left:337px">终端</span><span class="pt" style="left:400px">代码质量</span>
<svg style="left:1037px;top:20px" width="16" height="9" viewBox="0 0 16 9" fill="none" stroke="#e0e0e0" stroke-width="1.600"><path d="M1 8l7-7 7 7"/></svg>
<svg style="left:1086px;top:19px" width="14" height="14" viewBox="0 0 14 14" stroke="#e0e0e0" stroke-width="1.600"><path d="M1 1l12 12M13 1L1 13"/></svg>
</div>
<div class="abs" style="left:0;top:45px;width:1133px;height:41px;background:#292a2d;border-bottom:1px solid #3c3c3c">
<svg style="left:14px;top:11px" width="23" height="21" viewBox="0 0 23 21" fill="none" stroke="#9aa0a6" stroke-width="1.800"><path d="M19 8V3a2 2 0 0 0-2-2H3a2 2 0 0 0-2 2v12.500a2 2 0 0 0 2 2h5.500"/><path d="M10.500 8.500l11 4.800-4.600 1.600 3.400 4.200-1.700 1.300-3.300-4.200-2.800 3.600z" fill="#9aa0a6" stroke="none"/></svg>
<div class="abs" style="left:52px;top:8px;width:1px;height:24px;background:#494c50"></div>
<span class="t" style="left:79px;top:12px;font-size:18.500px;color:#e8eaed;letter-spacing:-0.35px">Wxml</span>
<div class="abs" style="left:143px;top:0;width:99px;height:40px;background:#000"></div><span class="t" style="left:159px;top:12px;font-size:18.500px;color:#fff;letter-spacing:-0.35px">Console</span>
<span class="t" style="left:259px;top:12px;font-size:18.500px;color:#e8eaed;letter-spacing:-0.35px">Sources</span><span class="t" style="left:356px;top:12px;font-size:18.500px;color:#e8eaed;letter-spacing:-0.35px">Network</span><span class="t" style="left:460px;top:12px;font-size:18.500px;color:#e8eaed;letter-spacing:-0.35px">Performance</span><span class="t" style="left:595px;top:12px;font-size:18.500px;color:#e8eaed;letter-spacing:-0.35px">Memory</span><span class="t" style="left:697px;top:12px;font-size:18.500px;color:#e8eaed;letter-spacing:-0.35px">AppData</span><span class="t" style="left:802px;top:12px;font-size:18.500px;color:#e8eaed;letter-spacing:-0.35px">Storage</span>
<svg style="left:894px;top:13px" width="14" height="13" viewBox="0 0 14 13" fill="none" stroke="#9aa0a6" stroke-width="1.700"><path d="M1 1l5.500 5.500L1 12M7.500 1L13 6.500 7.500 12"/></svg>
<svg style="left:950px;top:11px" width="17" height="17" viewBox="0 0 18 18"><path d="M9 1.200L17.300 16.500H.7z" fill="#f4bd00" stroke="#f4bd00" stroke-width="1.200" stroke-linejoin="round"/><path d="M9 6v5.500M9 13.300v1.900" stroke="#fff" stroke-width="2.200"/></svg><span class="t" style="left:972px;top:12px;font-size:18.500px;color:#e8eaed">1</span>
<div class="abs" style="left:996px;top:8px;width:1px;height:24px;background:#494c50"></div>
<svg style="left:1013px;top:9px" width="23" height="23" viewBox="0 0 24 24"><path fill="#9aa0a6" d="M19.400 13c.04-.3.06-.65.06-1s-.02-.7-.07-1l2.100-1.650a.5.5 0 0 0 .12-.64l-2-3.460a.5.5 0 0 0-.6-.22l-2.500 1a7.300 7.300 0 0 0-1.700-.98l-.38-2.650A.5.500 0 0 0 14 2h-4a.5.500 0 0 0-.5.420l-.37 2.650c-.6.250-1.170.590-1.700.980l-2.480-1a.5.500 0 0 0-.61.220l-2 3.460a.5.500 0 0 0 .12.640L4.570 11c-.05.300-.07.660-.07 1s.02.700.07 1l-2.110 1.650a.5.500 0 0 0-.12.640l2 3.460c.12.220.38.300.6.220l2.500-1c.52.400 1.080.730 1.700.980l.37 2.650c.04.240.25.420.5.420h4c.25 0 .46-.18.500-.42l.37-2.650a7.300 7.300 0 0 0 1.700-.98l2.480 1c.23.090.5 0 .61-.22l2-3.460a.5.500 0 0 0-.12-.64zM12 15.600a3.600 3.600 0 1 1 0-7.200 3.600 3.600 0 0 1 0 7.200z"/></svg>
<svg style="left:1064px;top:10px" width="6" height="21" viewBox="0 0 6 21" fill="#9aa0a6"><circle cx="3" cy="3" r="2.200"/><circle cx="3" cy="10.500" r="2.200"/><circle cx="3" cy="18" r="2.200"/></svg>
<svg style="left:1095px;top:9px" width="26" height="22" viewBox="0 0 26 22" fill="none" stroke="#6b6f74" stroke-width="2.600"><path d="M7 5.500V1.500h17.500v14H20"/><rect x="1.500" y="7" width="17" height="13.500"/></svg>
</div>
<div class="abs" style="left:0;top:86px;width:1133px;height:41px;background:#292a2d;border-bottom:1px solid #4a4a4a">
<svg style="left:12px;top:10px" width="23" height="20" viewBox="0 0 23 20" fill="none" stroke="#9aa0a6" stroke-width="1.700"><rect x="1" y="1" width="21" height="18"/><path d="M6 1v18"/><path d="M10 5.500l7 4.500-7 4.500z" fill="#9aa0a6" stroke="none"/></svg>
<svg style="left:57px;top:10px" width="20" height="20" viewBox="0 0 20 20" fill="none" stroke="#9aa0a6" stroke-width="2.300"><circle cx="10" cy="10" r="8.500"/><path d="M4 4l12 12"/></svg>
<div class="abs" style="left:94px;top:7px;width:1px;height:25px;background:#494c50"></div>
<span class="t" style="left:108px;top:12px;font-size:18.500px;color:#e8eaed">top</span>
<svg style="left:289px;top:14px" width="11" height="11" viewBox="0 0 11 11"><path d="M0 0h11L5.500 11z" fill="#9aa0a6"/></svg>
<div class="abs" style="left:315px;top:7px;width:1px;height:25px;background:#494c50"></div>
<svg style="left:330px;top:11px" width="25" height="17" viewBox="0 0 25 17"><path d="M12.500 0C7 0 2.300 3.500.2 8.500 2.300 13.500 7 17 12.500 17s10.200-3.500 12.300-8.500C22.700 3.500 18 0 12.500 0z" fill="#9aa0a6"/><circle cx="12.500" cy="8.500" r="5.500" fill="#292a2d"/><circle cx="12.500" cy="8.500" r="3.200" fill="#9aa0a6"/></svg>
<div class="abs" style="left:370px;top:7px;width:1px;height:25px;background:#494c50"></div>
<div class="abs" style="left:380px;top:4px;width:237px;height:31px;background:#242424;border:1px solid #5a5a5a"></div>
<span class="t" style="left:388px;top:12px;font-size:18.500px;color:#d0d0d0;letter-spacing:-0.3px">Filter</span>
<span class="t" style="left:630px;top:12px;font-size:18.500px;color:#e8eaed;letter-spacing:-0.35px">Default levels</span>
<svg style="left:743px;top:14px" width="11" height="11" viewBox="0 0 11 11"><path d="M0 0h11L5.500 11z" fill="#9aa0a6"/></svg>
<div class="abs" style="left:996px;top:7px;width:1px;height:25px;background:#494c50"></div>
<span class="t" style="left:1011px;top:12px;font-size:18.500px;color:#9aa0a6;letter-spacing:-0.35px">1 hidden</span>
<svg style="left:1097px;top:9px" width="23" height="23" viewBox="0 0 24 24"><path fill="#9aa0a6" d="M19.400 13c.04-.3.06-.65.06-1s-.02-.7-.07-1l2.100-1.650a.5.5 0 0 0 .12-.64l-2-3.460a.5.5 0 0 0-.6-.22l-2.500 1a7.300 7.300 0 0 0-1.700-.98l-.38-2.650A.5.500 0 0 0 14 2h-4a.5.500 0 0 0-.5.420l-.37 2.650c-.6.250-1.170.590-1.700.980l-2.480-1a.5.500 0 0 0-.61.220l-2 3.460a.5.500 0 0 0 .12.640L4.570 11c-.05.300-.07.660-.07 1s.02.700.07 1l-2.110 1.650a.5.500 0 0 0-.12.640l2 3.460c.12.220.38.300.6.220l2.500-1c.52.400 1.080.730 1.700.980l.37 2.650c.04.240.25.420.5.420h4c.25 0 .46-.18.500-.42l.37-2.650a7.300 7.300 0 0 0 1.700-.98l2.480 1c.23.090.5 0 .61-.22l2-3.460a.5.500 0 0 0-.12-.64zM12 15.600a3.600 3.600 0 1 1 0-7.200 3.600 3.600 0 0 1 0 7.200z"/></svg>
</div>
<div class="cr " style="top:127px"><span>[system] WeChatLib: 3.5.0 (2024.7.11 10:26:07)</span></div>
<div class="cr w" style="top:157px"><svg style="left:9px;top:6px" width="17" height="17" viewBox="0 0 18 18"><path d="M9 1.200L17.300 16.500H.7z" fill="#f4bd00" stroke="#f4bd00" stroke-width="1.200" stroke-linejoin="round"/><path d="M9 6v5.500M9 13.300v1.900" stroke="#fff" stroke-width="2.200"/></svg><span><span class="cj2">已经存在分包</span>EM ad</span></div>
<div class="cr " style="top:187px"><span>[system] Subpackages: N/A</span></div>
<div class="cr " style="top:217px"><span>[system] LazyCodeLoading: false</span></div>
<div class="cr " style="top:247px"><span>[system] Launch Time: 640 ms</span></div>
<svg style="left:14px;top:285px" width="8" height="12" viewBox="0 0 8 12" fill="none" stroke="#3b82f6" stroke-width="2"><path d="M1 1l5.500 5L1 11"/></svg>
<svg style="left:1096px;top:160px" width="37" height="95" viewBox="0 0 37 95">
<defs><linearGradient id="hg" x1="0" y1="0" x2="1" y2="1"><stop offset="0" stop-color="#d6ecfc"/><stop offset="1" stop-color="#8fc4ee"/></linearGradient></defs>
<path d="M27 68l10-7v31l-4-2z" fill="#eef3f8"/>
<circle cx="34" cy="80" r="5" fill="#bfe6f7"/>
<circle cx="42" cy="37" r="36" fill="url(#hg)"/>
<path d="M24 42q6-8 13-8v30q-8 0-12-6z" fill="#fff4e6"/>
<ellipse cx="35" cy="57" rx="4" ry="3" fill="#f7b9c8"/>
<ellipse cx="28.700" cy="48" rx="4" ry="6" fill="#1c58b5"/><circle cx="29.500" cy="50.500" r="2" fill="#38c6e6"/>
<path d="M12 24q6 14 3 20M20 20q5 12 4 22M28 18q6 8 9 12" stroke="#7fb4e2" stroke-width="1" fill="none"/>
<path d="M16.700 35.500l5.300 3v6.500l-5.300 3-5.300-3V38.500z" fill="#f5fbff"/>
<path d="M13.500 41.500q1 4.500 4 3.500t2-4.500" stroke="#5fd6ee" stroke-width="1.600" fill="none"/>
<path d="M4.500 22Q-1 16 4 9q4-5 10-3.500Q6 7 5 14q-.5 4 3 6.500z" fill="#cfe7fa"/>
</svg>
</div>
<div id="status">
<svg style="left:24px;top:13px" width="19" height="19" viewBox="0 0 19 19" fill="none" stroke="#9e9e9e" stroke-width="1.400"><circle cx="9.500" cy="9.500" r="8.500"/><path d="M6 6l7 7M13 6l-7 7"/></svg>
<span class="t" style="left:48px;top:13px;font-size:18px;color:#9e9e9e">0</span>
<svg style="left:63px;top:13px" width="20" height="18" viewBox="0 0 20 18" fill="none" stroke="#9e9e9e" stroke-width="1.400" stroke-linejoin="round"><path d="M10 1.200L19 17H1z"/><path d="M10 6.500v5.500M10 13.500v1.800"/></svg>
<span class="t" style="left:88px;top:13px;font-size:18px;color:#9e9e9e">0</span>
<span class="t" style="left:973px;top:13px;font-size:18px;color:#9e9e9e;letter-spacing:-0.3px"><i class="k1">行</i> 26, <i class="k1">列</i> 1 (<i class="k2">选中</i> 647)</span>
<span class="t" style="left:1166px;top:13px;font-size:18px;color:#9e9e9e;letter-spacing:-0.3px"><i class="k2">空格</i>: 2</span>
<span class="t" style="left:1245px;top:13px;font-size:18px;color:#9e9e9e;letter-spacing:-0.6px">UTF-8</span>
<span class="t" style="left:1316px;top:13px;font-size:18px;color:#9e9e9e;letter-spacing:-1.100px">CRLF</span>
<span class="t" style="left:1380px;top:13px;font-size:18px;color:#9e9e9e;letter-spacing:-0.8px">WXML</span>
</div>
<div id="vsep"></div>
<div id="taskbar">
<div class="abs" style="left:0;top:0;width:2137px;height:1px;background:rgba(255,255,255,.13)"></div>
<!-- weather -->
<svg style="left:26px;top:12px" width="46" height="42" viewBox="0 0 46 42">
<path d="M4 20.500Q4 37 19.500 38 33 37.500 36 23q-4 6.500-12.500 5.500Q13 27 4 20.500z" fill="#f7a11c"/>
<path d="M7 19.500h15a5 5 0 0 0 .5-10 7.500 7.500 0 0 0-14.200-.6A5.500 5.500 0 0 0 7 19.500z" fill="#c9dcf6"/>
<path d="M21 38.500h14.500a5.200 5.200 0 0 0 .5-10.400 7.500 7.500 0 0 0-14.200-.8A5.700 5.700 0 0 0 21 38.500z" fill="#d3e3f9"/>
<circle cx="32" cy="9.500" r="11.500" fill="#ff8fa6"/>
</svg>
<span class="t" style="left:53px;top:13px;font-size:18px;color:#1a1a1a">1</span>
<span class="t" style="left:76px;top:15px;font-size:18.500px;color:#fff;letter-spacing:-0.3px">26°C</span>
<span class="t" style="left:76px;top:39px;font-size:18px;color:#d6d6d6">局部多云</span>
<!-- start -->
<svg style="left:718px;top:19px" width="36" height="36" viewBox="0 0 36 36"><defs><linearGradient id="wg" x1="0" y1="0" x2="1" y2="1"><stop offset="0" stop-color="#6fe0ff"/><stop offset="1" stop-color="#0a8bea"/></linearGradient></defs><path d="M0 2a2 2 0 0 1 2-2h15v17H0zM19 0h15a2 2 0 0 1 2 2v15H19zM0 19h17v17H2a2 2 0 0 1-2-2zM19 19h17v15a2 2 0 0 1-2 2H19z" fill="url(#wg)"/></svg>
<!-- search -->
<div class="abs" style="left:773px;top:12px;width:330px;height:49px;border-radius:25px;background:rgba(150,158,190,.24);border:1px solid rgba(190,195,225,.26)"></div>
<svg style="left:790px;top:25px" width="24" height="25" viewBox="0 0 24 25" fill="none" stroke="#f0f0f0" stroke-width="2.200"><circle cx="10" cy="10" r="8"/><path d="M15.500 16l7 7.500"/></svg>
<span class="t" style="left:828px;top:26px;font-size:21.500px;color:#dcdce6">搜索</span>
<div class="abs" style="left:1021px;top:17px;width:78px;height:39px;border-radius:20px;background:rgba(150,150,200,.25)"></div>
<svg style="left:1043px;top:23px" width="34" height="28" viewBox="0 0 34 28"><path d="M11 5V2.500Q11 1 12.500 1h9Q23 1 23 2.500V5" fill="none" stroke="#3a2a1a" stroke-width="2.200"/><rect x="0" y="5" width="34" height="22" rx="3" fill="#c9700e"/><path d="M0 8a3 3 0 0 1 3-3h28a3 3 0 0 1 3 3v6q-17 5-34 0z" fill="#e8901a"/><rect x="14" y="13" width="6" height="5" rx="1" fill="#ffd84a"/></svg>
<!-- task view -->
<svg style="left:1121px;top:19px" width="36" height="34" viewBox="0 0 38 36"><rect x="10" y="0" width="27" height="25" rx="3" fill="#f2f2f2"/><rect x="0" y="9" width="27" height="25" rx="3" fill="#5c5c5c"/><path d="M10 9h17v16H13a3 3 0 0 1-3-3z" fill="#c9c9c9"/></svg>
<!-- explorer -->
<svg style="left:1187px;top:20px" width="36" height="32" viewBox="0 0 38 36" preserveAspectRatio="none"><path d="M0 3a3 3 0 0 1 3-3h9l4 4h19a3 3 0 0 1 3 3v5H0z" fill="#e9a820"/><rect x="0" y="8" width="38" height="26" rx="2.500" fill="#ffd355"/><path d="M9 34v-8a3 3 0 0 1 3-3h14a3 3 0 0 1 3 3v8z" fill="#1d7fd6"/><rect x="14" y="26.500" width="10" height="2.500" rx="1" fill="#0c4f91"/></svg>
<!-- edge -->
<svg style="left:1253px;top:18px" width="36" height="36" viewBox="0 0 40 40"><defs><linearGradient id="eg" x1="0" y1="0" x2="1" y2="0"><stop offset="0" stop-color="#2f8fe6"/><stop offset=".55" stop-color="#33c0d8"/><stop offset="1" stop-color="#6fe07a"/></linearGradient></defs><path d="M2 20A18 18 0 0 1 38 17q0 8-9 8-6 0-6-4 0-2 1-3-3-5-9-3-7 3-6 11 1 8 10 11h-2Q4 36 2 20z" fill="url(#eg)"/><path d="M9 24q-1 9 9 13 10 1 16-6-6 3-11 0-6-4-4-10-7 0-10 3z" fill="#155fb5"/><rect x="2" y="24" width="17" height="14" rx="2" fill="#c9700e"/><path d="M2 26a2 2 0 0 1 2-2h13a2 2 0 0 1 2 2v4q-8.500 3-17 0z" fill="#e8901a"/><rect x="9" y="29" width="3" height="3" fill="#ffd84a"/><path d="M7.500 24v-2h6v2" fill="none" stroke="#3a2a1a" stroke-width="1.500"/></svg>
<!-- store -->
<svg style="left:1319px;top:18px" width="36" height="36" viewBox="0 0 36 36"><path d="M9 8V3h18v5" fill="none" stroke="#2f9fe8" stroke-width="2.200" stroke-linejoin="round"/><path d="M0 7a3 3 0 0 1 3-3h30a3 3 0 0 1 3 3v24a4 4 0 0 1-4 4H4a4 4 0 0 1-4-4z" fill="#f6f6f6"/><path d="M9 6V2h18v4" fill="none" stroke="#2f9fe8" stroke-width="2.200" stroke-linejoin="round"/><rect x="10" y="12.500" width="7.500" height="7.500" fill="#f25022"/><rect x="18.800" y="12.500" width="7.500" height="7.500" fill="#7fba00"/><rect x="10" y="21.300" width="7.500" height="7.500" fill="#00a4ef"/><rect x="18.800" y="21.300" width="7.500" height="7.500" fill="#ffb900"/></svg>
<!-- wechat devtools (active) -->
<div class="abs" style="left:1373px;top:6px;width:60px;height:61px;border-radius:7px;background:rgba(255,255,255,.075);border:1px solid rgba(255,255,255,.07)"></div>
<svg style="left:1385px;top:20px" width="37" height="33" viewBox="0 0 39 37" preserveAspectRatio="none"><path d="M19.500 0C8.700 0 0 7 0 15.700c0 5 2.900 9.500 7.500 12.400L6 35l7.300-4.500q3 .8 6.200.8C30.300 31.300 39 24.300 39 15.700S30.300 0 19.500 0z" fill="#f2f2f2"/><path d="M13 10.500l5 3.500-5 3.500" fill="none" stroke="#1aad5a" stroke-width="2.200"/><path d="M20 19h6" stroke="#1aad5a" stroke-width="2.200"/><rect x="28" y="10.500" width="3.500" height="3.500" fill="#1aad5a"/></svg>
<div class="abs" style="left:1391px;top:60px;width:24px;height:5px;border-radius:3px;background:#d9a0ee"></div>
<!-- tray -->
<svg style="left:1811px;top:30px" width="19" height="11" viewBox="0 0 19 11" fill="none" stroke="#fff" stroke-width="2.200"><path d="M1 10l8.500-8.500L18 10"/></svg>
<span class="t" style="left:1855px;top:24px;font-size:24px;color:#fff">英</span>
<svg style="left:1903px;top:22px" width="26" height="27" viewBox="0 0 26 27" fill="none" stroke="#fff" stroke-width="1.700"><path d="M17 17H2.500A1.500 1.500 0 0 1 1 15.500v-12A1.500 1.500 0 0 1 2.500 2H16"/><path d="M10.500 17v5.500M5.500 22.500h16M21.500 12v10.500"/><rect x="18.500" y="1" width="6" height="11" rx="2"/><path d="M21.500 3.500v3"/></svg>
<svg style="left:1939px;top:25px" width="25" height="22" viewBox="0 0 25 22" fill="none" stroke="#fff" stroke-width="1.700"><path d="M1 7.500h4.500L11 2.500v17l-5.500-5H1z" stroke-linejoin="round"/><path d="M14 7.500q2.500 3.500 0 7M17 4.500q4.500 6.500 0 13"/><path d="M20.500 2q5.500 9 0 18" stroke="#8a7a9a"/></svg>
<span class="t" style="left:2038px;top:15.500px;font-size:18.500px;color:#fff;letter-spacing:-0.3px">0:44</span>
<span class="t" style="left:1989px;top:39.500px;font-size:18.500px;color:#fff;letter-spacing:-0.2px">2024/7/22</span>
<svg style="left:2085px;top:24px" width="21" height="26" viewBox="0 0 21 26"><path d="M10.500 0a8 8 0 0 0-8 8v6.500L.3 18.300a1.200 1.200 0 0 0 1 1.800h18.400a1.200 1.200 0 0 0 1-1.800l-2.200-3.800V8a8 8 0 0 0-8-8z" fill="#f0b6f5"/><path d="M7 22h7a3.500 3.500 0 0 1-7 0z" fill="#f0b6f5"/></svg>
</div>
</body>
</html>
